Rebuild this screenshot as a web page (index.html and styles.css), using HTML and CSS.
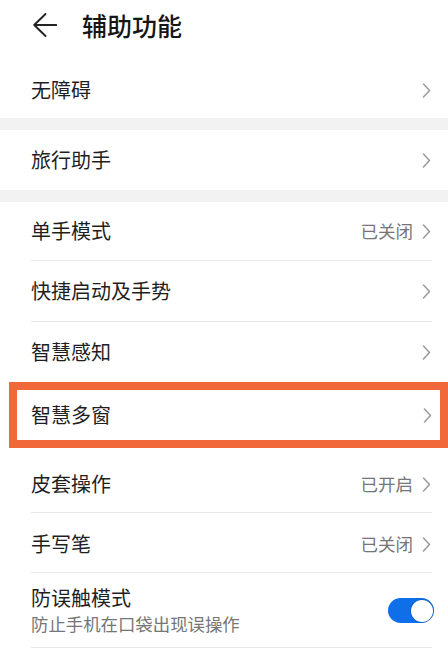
FILE: index.html
```html
<!DOCTYPE html>
<html lang="zh-CN">
<head>
<meta charset="utf-8">
<title>辅助功能</title>
<link rel="stylesheet" href="styles.css">
</head>
<body>
<header class="header">
  <svg class="back" width="24" height="24" viewBox="0 0 24 24"><path d="M23.5 12H1.2M12.5 1L1.2 12L12.5 23" fill="none" stroke="#222" stroke-width="1.9" stroke-linecap="round" stroke-linejoin="round"/></svg>
  <h1 class="title">辅助功能</h1>
</header>

<section class="group first">
  <div class="row r1"><div class="inner"><span class="label">无障碍</span><span class="right"><svg class="chev" width="9" height="15" viewBox="0 0 9 15"><path d="M1.5 1L7.5 7.5L1.5 14" fill="none" stroke="#9a9a9a" stroke-width="1.5" stroke-linecap="round" stroke-linejoin="round"/></svg></span></div></div>
</section>
<div class="band"></div>
<section class="group">
  <div class="row r2"><div class="inner"><span class="label">旅行助手</span><span class="right"><svg class="chev" width="9" height="15" viewBox="0 0 9 15"><path d="M1.5 1L7.5 7.5L1.5 14" fill="none" stroke="#9a9a9a" stroke-width="1.5" stroke-linecap="round" stroke-linejoin="round"/></svg></span></div></div>
</section>
<div class="band"></div>
<section class="group">
  <div class="row r3"><div class="inner line"><span class="label">单手模式</span><span class="right"><span class="value">已关闭</span><svg class="chev" width="9" height="15" viewBox="0 0 9 15"><path d="M1.5 1L7.5 7.5L1.5 14" fill="none" stroke="#9a9a9a" stroke-width="1.5" stroke-linecap="round" stroke-linejoin="round"/></svg></span></div></div>
  <div class="row r4"><div class="inner line"><span class="label">快捷启动及手势</span><span class="right"><svg class="chev" width="9" height="15" viewBox="0 0 9 15"><path d="M1.5 1L7.5 7.5L1.5 14" fill="none" stroke="#9a9a9a" stroke-width="1.5" stroke-linecap="round" stroke-linejoin="round"/></svg></span></div></div>
  <div class="row r5"><div class="inner"><span class="label">智慧感知</span><span class="right"><svg class="chev" width="9" height="15" viewBox="0 0 9 15"><path d="M1.5 1L7.5 7.5L1.5 14" fill="none" stroke="#9a9a9a" stroke-width="1.5" stroke-linecap="round" stroke-linejoin="round"/></svg></span></div></div>
  <div class="row highlight"><div class="inner"><span class="label">智慧多窗</span><span class="right"><svg class="chev" width="9" height="15" viewBox="0 0 9 15"><path d="M1.5 1L7.5 7.5L1.5 14" fill="none" stroke="#9a9a9a" stroke-width="1.5" stroke-linecap="round" stroke-linejoin="round"/></svg></span></div></div>
  <div class="row r7"><div class="inner line"><span class="label">皮套操作</span><span class="right"><span class="value">已开启</span><svg class="chev" width="9" height="15" viewBox="0 0 9 15"><path d="M1.5 1L7.5 7.5L1.5 14" fill="none" stroke="#9a9a9a" stroke-width="1.5" stroke-linecap="round" stroke-linejoin="round"/></svg></span></div></div>
  <div class="row r8"><div class="inner line"><span class="label">手写笔</span><span class="right"><span class="value">已关闭</span><svg class="chev" width="9" height="15" viewBox="0 0 9 15"><path d="M1.5 1L7.5 7.5L1.5 14" fill="none" stroke="#9a9a9a" stroke-width="1.5" stroke-linecap="round" stroke-linejoin="round"/></svg></span></div></div>
  <div class="row r9"><div class="inner line">
    <div class="texts"><span class="label">防误触模式</span><span class="sub">防止手机在口袋出现误操作</span></div>
    <span class="toggle on"><span class="knob"></span></span>
  </div></div>
</section>
</body>
</html>
```

FILE: styles.css
```css
* { box-sizing: border-box; }
html, body { margin: 0; padding: 0; background: #ffffff; }
body {
  font-family: "Noto Sans CJK SC", "Noto Sans", sans-serif;
  color: #1f1f1f;
  width: 448px;
  overflow: hidden;
}
.header {
  height: 50px;
  display: flex;
  align-items: center;
  padding-left: 33px;
}
.back { display: block; flex: none; }
.title {
  margin: 0 0 0 25px;
  font-size: 25px;
  font-weight: 500;
  line-height: 30px;
  color: #161616;
}
.group.first { padding-top: 12px; }
.band { height: 12px; background: #f2f2f3; }
.row { display: flex; }
.inner {
  flex: 1;
  margin: 0 16px 0 31px;
  display: flex;
  align-items: center;
  justify-content: space-between;
}
.inner.line { border-bottom: 1px solid #e8e8e8; }
.label { font-size: 20px; line-height: 28px; color: #1f1f1f; }
.right { display: flex; align-items: center; gap: 9px; margin-right: 1px; }
.value { font-size: 17.5px; line-height: 24px; color: #767676; }
.chev { display: block; }
.r1 { height: 56px; }
.r2 { height: 60px; }
.r3 { height: 59px; }
.r4 { height: 61px; }
.r5 { height: 60px; }
.highlight {
  height: 66px;
  margin-left: 9px;
  border: 8px solid #f1693a;
}
.highlight .inner { margin: 0 7px 0 14px; }
.r7 { height: 65px; }
.r7 .inner { padding-top: 8px; }
.r8 { height: 60px; }
.r8 .inner { padding-top: 3px; }
.r9 { height: 75px; }
.r9 .inner { padding-top: 1px; }
.texts { display: flex; flex-direction: column; }
.texts .label { line-height: 27px; }
.sub { font-size: 17.4px; line-height: 26px; color: #767676; }
.toggle {
  width: 46px;
  height: 25px;
  border-radius: 13px;
  background: #0e6fe9;
  display: flex;
  align-items: center;
  justify-content: flex-end;
  padding: 1.5px;
  margin-right: -2px;
}
.knob {
  width: 22px;
  height: 22px;
  border-radius: 50%;
  background: #ffffff;
  box-shadow: 0 0 0 1px rgba(0,0,0,0.12);
}
```
